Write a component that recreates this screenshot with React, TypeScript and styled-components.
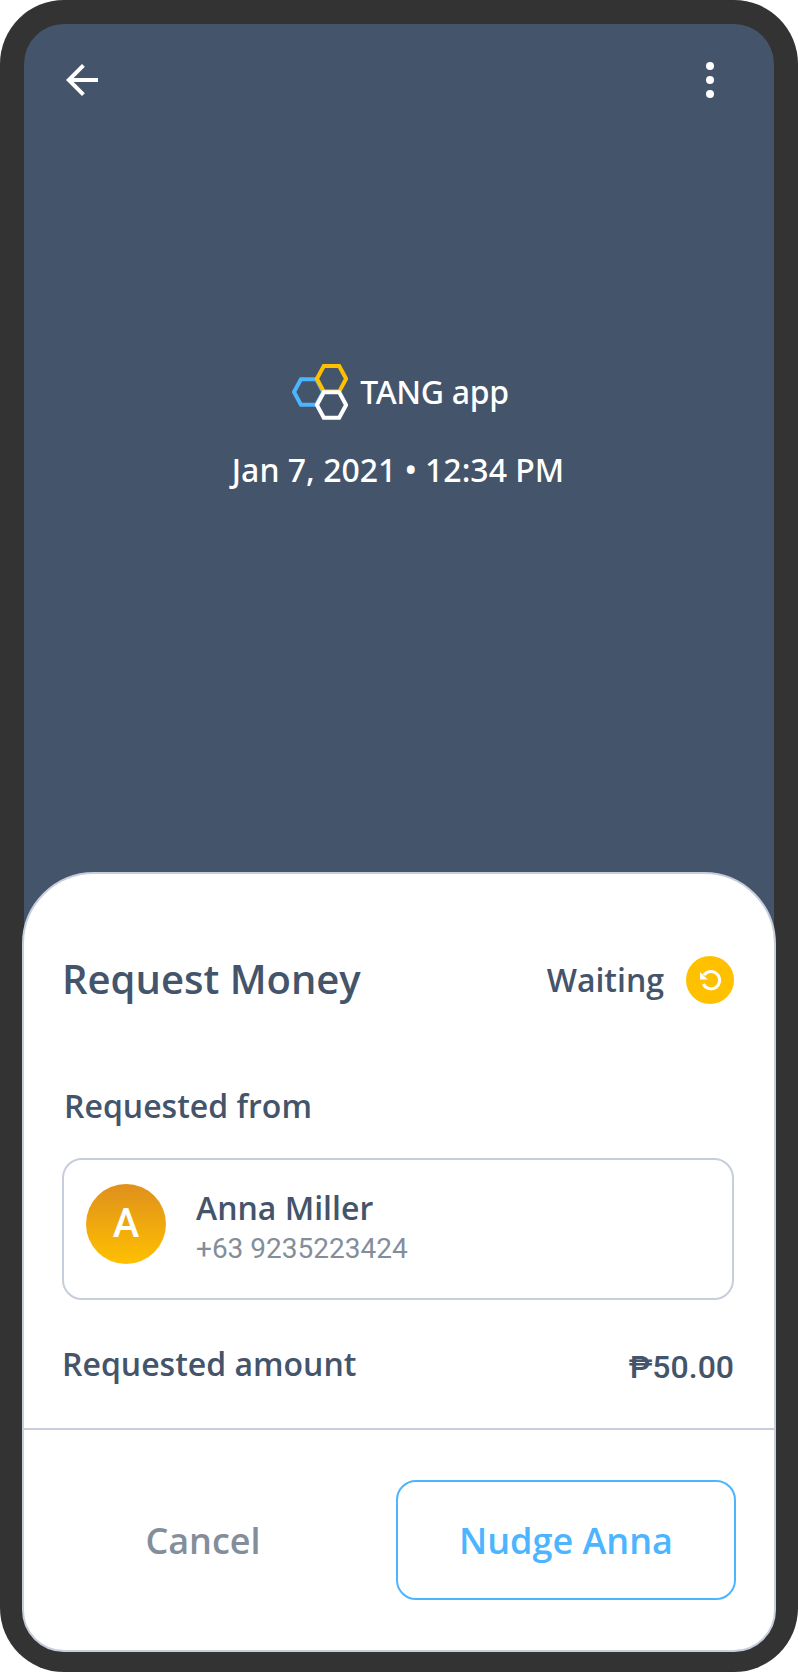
import React from "react";
import styled, { createGlobalStyle } from "styled-components";

const GlobalStyle = createGlobalStyle`
  *, *::before, *::after { box-sizing: border-box; }
  body { margin: 0; background: #fff; }
`;

const sans = `"Open Sans", "Noto Sans", sans-serif`;
const noto = `"Noto Sans", "Open Sans", sans-serif`;
const roboto = `Roboto, "Noto Sans", sans-serif`;
const slate = "#44546a";
const line = "#c8cddc";

const Phone = styled.div`
  width: 798px;
  height: 1672px;
  padding: 24px 22px 20px;
  border-radius: 64px;
  background: #333;
  display: flex;
  flex-direction: column;
`;

const Screen = styled.div`
  flex: 1;
  display: flex;
  flex-direction: column;
  margin: 0 2px;
  border-radius: 40px 40px 42px 42px;
  background: ${slate};
`;

const TopBar = styled.header`
  height: 112px;
  padding: 0 34px;
  display: flex;
  align-items: center;
  justify-content: space-between;
`;

const IconButton = styled.button`
  border: 0;
  padding: 0;
  background: none;
  color: #fff;
  display: flex;
`;

const Hero = styled.section`
  height: 736px;
  padding-top: 228px;
  display: flex;
  flex-direction: column;
  align-items: center;
`;

const Brand = styled.div`
  display: flex;
  align-items: center;
  height: 56px;
  gap: 12px;
  margin-left: 3px;
`;

const Label = styled.span<{
  $size?: number;
  $color?: string;
  $font?: string;
  $weight?: number;
  $lift?: number;
  $spacing?: number;
}>`
  font-family: ${(p) => p.$font ?? sans};
  font-size: ${(p) => p.$size ?? 32}px;
  font-weight: ${(p) => p.$weight ?? 600};
  letter-spacing: ${(p) => p.$spacing ?? 0}px;
  color: ${(p) => p.$color ?? slate};
  margin-bottom: ${(p) => p.$lift ?? 0}px;
  line-height: 44px;
  white-space: nowrap;
`;

const Timestamp = styled.div`
  margin: 28px 2px 0 0;
  height: 44px;
  display: flex;
`;

const Sheet = styled.main`
  flex: 1;
  margin: 0 -2px;
  border: 2px solid ${line};
  border-radius: 72px 72px 42px 42px;
  background: #fff;
  display: flex;
  flex-direction: column;
`;

const Details = styled.section`
  height: 556px;
  padding: 82px 40px 0 38px;
  border-bottom: 2px solid ${line};
`;

const Row = styled.div`
  display: flex;
  align-items: center;
  justify-content: space-between;
  height: 48px;
`;

const Status = styled.div`
  display: flex;
  align-items: center;
  gap: 22px;
`;

const StatusBadge = styled.span`
  width: 48px;
  height: 48px;
  border-radius: 50%;
  background: #ffc000;
  display: flex;
  align-items: center;
  justify-content: center;
`;

const SectionTitle = styled.div`
  margin: 80px 0 30px 2px;
  height: 44px;
  display: flex;
`;

const ContactCard = styled.div`
  height: 142px;
  margin-bottom: 42px;
  border: 2px solid ${line};
  border-radius: 20px;
  padding: 24px 22px;
  display: flex;
  gap: 30px;
`;

const Avatar = styled.div`
  width: 80px;
  height: 80px;
  border-radius: 50%;
  background: linear-gradient(#df901c, #ffc000);
  display: flex;
  align-items: center;
  justify-content: center;
`;

const Contact = styled.div`
  padding-top: 2px;
  display: flex;
  flex-direction: column;
`;

const PhoneNumber = styled.span`
  margin-top: -1px;
  font: 400 28px/40px ${roboto};
  color: #848e9b;
  white-space: nowrap;
`;

const Actions = styled.footer`
  flex: 1;
  padding: 50px 38px 0 8px;
  display: flex;
`;

const ActionButton = styled.button<{ $primary?: boolean }>`
  width: ${(p) => (p.$primary ? 340 : 342)}px;
  margin-left: ${(p) => (p.$primary ? 22 : 0)}px;
  height: 120px;
  padding: 2px 0 0;
  border: ${(p) => (p.$primary ? "2px solid #4db5ff" : "0")};
  border-radius: 20px;
  background: none;
  font: 600 36px/50px ${sans};
  color: ${(p) => (p.$primary ? "#4db5ff" : "#848e9b")};
`;

const hexagon = (cx: number, cy: number) =>
  [[-14.6, 0], [-7.7, -12.8], [7.7, -12.8], [14.6, 0], [7.7, 12.8], [-7.7, 12.8]]
    .map(([x, y]) => `${cx + x},${cy + y}`)
    .join(" ");

const Logo = () => (
  <svg width="56" height="56" viewBox="0 0 56 56" fill="none" strokeWidth="4">
    <polygon points={hexagon(16.6, 28)} stroke="#4db5ff" />
    <polygon points={hexagon(39.5, 14.8)} stroke="#ffc000" />
    <polygon points={hexagon(39.5, 41)} stroke="#fff" />
  </svg>
);

export default function App() {
  return (
    <>
      <GlobalStyle />
      <Phone>
        <Screen>
          <TopBar>
            <IconButton aria-label="Back">
              <svg width="48" height="48" viewBox="0 0 24 24" fill="currentColor">
                <path d="M20 11H7.83l5.59-5.59L12 4l-8 8 8 8 1.41-1.41L7.83 13H20v-2z" />
              </svg>
            </IconButton>
            <IconButton aria-label="More">
              <svg width="60" height="48" viewBox="0 0 60 48" fill="currentColor">
                <circle cx="30" cy="10" r="4" />
                <circle cx="30" cy="24" r="4" />
                <circle cx="30" cy="38" r="4" />
              </svg>
            </IconButton>
          </TopBar>
          <Hero>
            <Brand>
              <Logo />
              <Label $font={noto} $weight={500} $color="#fff" $spacing={-0.35}>TANG app</Label>
            </Brand>
            <Timestamp>
              <Label $font={noto} $weight={500} $color="#fff">Jan 7, 2021 • 12:34 PM</Label>
            </Timestamp>
          </Hero>
          <Sheet>
            <Details>
              <Row>
                <Label $size={40} $lift={2}>Request Money</Label>
                <Status>
                  <Label>Waiting</Label>
                  <StatusBadge>
                    <svg width="24" height="24" viewBox="0 0 24 24" fill="none" stroke="#fff" strokeWidth="3">
                      <path d="M6 7.2A8.6 8.6 0 1 1 5.3 16" />
                      <path d="M2 4v7.5h7.7z" fill="#fff" stroke="none" />
                    </svg>
                  </StatusBadge>
                </Status>
              </Row>
              <SectionTitle>
                <Label>Requested from</Label>
              </SectionTitle>
              <ContactCard>
                <Avatar>
                  <Label $font={roboto} $weight={500} $size={40} $color="#fff">A</Label>
                </Avatar>
                <Contact>
                  <Label>Anna Miller</Label>
                  <PhoneNumber>+63 9235223424</PhoneNumber>
                </Contact>
              </ContactCard>
              <Row>
                <Label $lift={4}>Requested amount</Label>
                <Label $font={roboto} $weight={500} $lift={-2}>₱50.00</Label>
              </Row>
            </Details>
            <Actions>
              <ActionButton>Cancel</ActionButton>
              <ActionButton $primary>Nudge Anna</ActionButton>
            </Actions>
          </Sheet>
        </Screen>
      </Phone>
    </>
  );
}
